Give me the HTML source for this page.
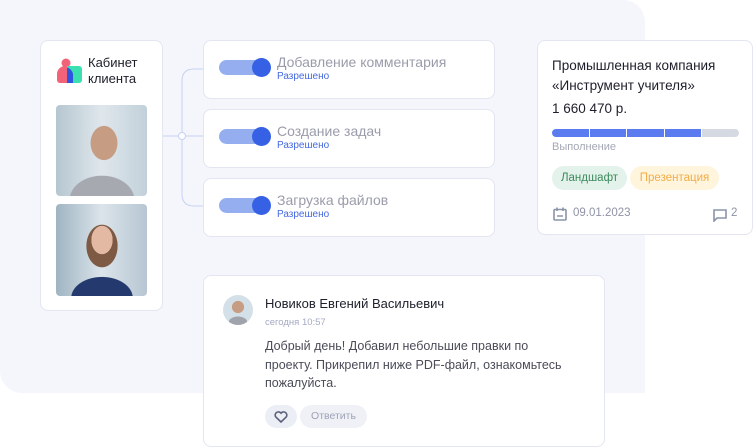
<!DOCTYPE html>
<html><head><meta charset="utf-8"><style>
*{box-sizing:border-box;margin:0;padding:0}
body{width:753px;height:447px;background:#fff;font-family:"Liberation Sans","Noto Sans CJK SC",sans-serif;position:relative;overflow:hidden}
.bg{position:absolute;left:0;top:0;width:645px;height:393px;background:#f5f6fb;border-radius:0 22px 0 22px}
.card{position:absolute;background:#fff;border:1px solid #e3e5f0;border-radius:8px}
.t{position:absolute;white-space:nowrap}
.tog{position:absolute;left:15px;top:19px;width:50px;height:15px;border-radius:8px;background:#95aef0}
.tog:after{content:"";position:absolute;right:-2px;top:-2px;width:19px;height:19px;border-radius:50%;background:#3761e4}
.tt{left:73px;top:13px;font-size:14px;color:#9a9caa}
.ts{left:73px;top:30px;font-size:10px;color:#4468e0}
</style></head><body>
<div class="bg"></div>
<svg style="position:absolute;left:0;top:0" width="753" height="447">
<g fill="none" stroke="#c5d2f5" stroke-width="1">
<path d="M162 136H203"/>
<path d="M203 69H194Q182 69 182 81V194Q182 206 194 206H203"/>
</g>
<circle cx="182" cy="136" r="3.5" fill="#fff" stroke="#c5d2f5"/>
</svg>
<div class="card" style="left:40px;top:40px;width:123px;height:271px">
 <svg style="position:absolute;left:16px;top:17px" width="25" height="25" viewBox="0 0 25 25">
  <circle cx="9" cy="5" r="4.5" fill="#f2637a"/>
  <path d="M0 16a8 8 0 0 1 16 0v9H3a3 3 0 0 1-3-3z" fill="#f2637a"/>
  <path d="M10 8h12a3 3 0 0 1 3 3v11a3 3 0 0 1-3 3H10z" fill="#3be0b0"/>
  <path d="M10 9.5a8 8 0 0 1 6 6.5v9h-6z" fill="#2f55e0"/>
 </svg>
 <div class="t" style="left:47px;top:14px;font-size:13px;line-height:16px;color:#1d1f2a">Кабинет<br>клиента</div>
 <div style="position:absolute;left:15px;top:64px;width:91px;height:91px;border-radius:4px;background:radial-gradient(ellipse 22px 28px at 48px 38px,#c69c83 60%,transparent 62%),radial-gradient(ellipse 40px 30px at 46px 95px,#a7a9b1 80%,transparent 82%),linear-gradient(90deg,#b6c6d0,#dfe7ec 50%,#c2d0da)"></div>
 <div style="position:absolute;left:15px;top:163px;width:91px;height:92px;border-radius:4px;background:radial-gradient(ellipse 15px 20px at 46px 36px,#e4b9a3 70%,transparent 72%),radial-gradient(ellipse 22px 30px at 46px 42px,#7e5a44 70%,transparent 72%),radial-gradient(ellipse 38px 26px at 46px 94px,#243a6e 80%,transparent 82%),linear-gradient(90deg,#9fb4c2,#dbe4ea 50%,#b7c6d3)"></div>
</div>
<div class="card" style="left:203px;top:40px;width:292px;height:59px"><div class="tog"></div><div class="t tt">Добавление комментария</div><div class="t ts">Разрешено</div></div>
<div class="card" style="left:203px;top:109px;width:292px;height:59px"><div class="tog"></div><div class="t tt">Создание задач</div><div class="t ts">Разрешено</div></div>
<div class="card" style="left:203px;top:178px;width:292px;height:59px"><div class="tog"></div><div class="t tt">Загрузка файлов</div><div class="t ts">Разрешено</div></div>
<div class="card" style="left:537px;top:40px;width:216px;height:195px">
 <div class="t" style="left:14px;top:15px;font-size:13.5px;line-height:20px;color:#1d1f2a">Промышленная компания<br>«Инструмент учителя»</div>
 <div class="t" style="left:14px;top:60px;font-size:13.5px;color:#1d1f2a">1 660 470 р.</div>
 <div style="position:absolute;left:14px;top:88px;width:187px;height:8px;border-radius:4px;overflow:hidden;display:flex;gap:1px;background:#fff">
  <div style="flex:1;background:#5a7cf0"></div><div style="flex:1;background:#5a7cf0"></div><div style="flex:1;background:#5a7cf0"></div><div style="flex:1;background:#5a7cf0"></div><div style="flex:1;background:#d5d9e2"></div></div>
 <div class="t" style="left:14px;top:100px;font-size:11px;color:#a5a8b6">Выполнение</div>
 <div class="t" style="left:14px;top:125px;height:24px;width:75px;border-radius:12px;background:#e3f2ea;color:#3c8a5c;font-size:11.5px;line-height:24px;text-align:center">Ландшафт</div>
 <div class="t" style="left:92px;top:125px;height:24px;width:89px;border-radius:12px;background:#fff4dc;color:#f1ad47;font-size:11.5px;line-height:24px;text-align:center">Презентация</div>
 <svg style="position:absolute;left:15px;top:166px" width="14" height="14" viewBox="0 0 14 14" fill="none" stroke="#8a93a8" stroke-width="1.6"><rect x="1" y="2.5" width="12" height="10.5" rx="1"/><path d="M4 0.5v3.5M10 0.5v3.5M4 9h6"/></svg>
 <div class="t" style="left:35px;top:166px;font-size:11.5px;color:#8e93a6">09.01.2023</div>
 <svg style="position:absolute;left:175px;top:168px" width="14" height="13" viewBox="0 0 14 13" fill="none" stroke="#8a93a8" stroke-width="1.6"><path d="M1 1h12v8H4l-3 3z"/></svg>
 <div class="t" style="left:193px;top:166px;font-size:11.5px;color:#8e93a6">2</div>
</div>
<div class="card" style="left:203px;top:275px;width:402px;height:172px">
 <div style="position:absolute;left:19px;top:19px;width:30px;height:30px;border-radius:50%;background:radial-gradient(circle at 50% 40%,#c69c83 25%,transparent 27%),radial-gradient(ellipse 10px 6px at 50% 90%,#a0a3ab 90%,transparent 92%),#d4e0e8"></div>
 <div class="t" style="left:61px;top:20px;font-size:13px;color:#1d1f2a">Новиков Евгений Васильевич</div>
 <div class="t" style="left:61px;top:41px;font-size:9.5px;color:#a5a9c3">сегодня 10:57</div>
 <div class="t" style="left:61px;top:61px;font-size:12.5px;line-height:18.5px;color:#4a4c58">Добрый день! Добавил небольшие правки по<br>проекту. Прикрепил ниже PDF-файл, ознакомьтесь<br>пожалуйста.</div>
 <div class="t" style="left:61px;top:129px;width:32px;height:23px;border-radius:12px;background:#eceef6"><svg style="position:absolute;left:9px;top:6px" width="14" height="12" viewBox="0 0 14 12" fill="none" stroke="#5c6378" stroke-width="1.6"><path d="M7 11L1.8 6A3 3 0 0 1 7 2.2 3 3 0 0 1 12.2 6z"/></svg></div>
 <div class="t" style="left:96px;top:129px;width:67px;height:23px;border-radius:12px;background:#f0f1f7;color:#9ea1b3;font-size:10.5px;line-height:23px;text-align:center">Ответить</div>
</div>
</body></html>
